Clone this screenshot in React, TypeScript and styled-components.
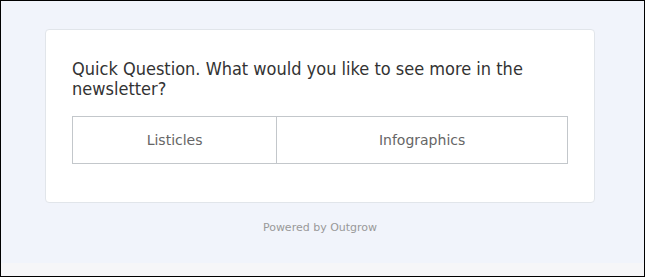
import styled, { createGlobalStyle } from "styled-components";

const GlobalStyle = createGlobalStyle`
    html, body {
        margin: 0;
        padding: 0;
        background: #ffffff;
    }
    * {
        box-sizing: border-box;
    }
`;

const Frame = styled.div`
    width: 645px;
    height: 277px;
    border: 1px solid #000;
    background: #f6f6f8;
    display: flex;
    flex-direction: column;
    font-family: "DejaVu Sans", Verdana, sans-serif;
`;

const Stage = styled.div`
    height: 262px;
    background: #f1f4fb;
    padding: 28px 49px 0 44px;
    display: flex;
    flex-direction: column;
`;

const Card = styled.div`
    height: 174px;
    background: #fff;
    border: 1px solid #e1e5ea;
    border-radius: 4px;
    padding: 29px 26px 0 26px;
`;

const Question = styled.p`
    margin: 0 0 17px;
    color: #333;
    font-size: 18px;
    line-height: 20px;
    font-stretch: condensed;
`;

const Options = styled.div`
    display: grid;
    grid-template-columns: 204fr 292fr;
    height: 48px;
    border: 1px solid #c3c7cb;
`;

const Option = styled.button<{ $first?: boolean }>`
    all: unset;
    display: flex;
    align-items: center;
    justify-content: center;
    border-left: ${(p) => (p.$first ? "none" : "1px solid #c3c7cb")};
    color: #666;
    font-size: 14px;
    font-family: "DejaVu Sans", Verdana, sans-serif;
    cursor: pointer;
    &:hover {
        background-color: #f7f9fc;
    }
`;

const Powered = styled.div`
    margin-top: 18px;
    text-align: center;
    font-size: 11px;
    color: #999;
`;

export default function App() {
    return (
        <>
            <GlobalStyle />
            <Frame>
                <Stage>
                    <Card>
                        <Question>
                            Quick Question. What would you like to see more in
                            the newsletter?
                        </Question>
                        <Options>
                            <Option $first>Listicles</Option>
                            <Option>Infographics</Option>
                        </Options>
                    </Card>
                    <Powered>Powered by Outgrow</Powered>
                </Stage>
            </Frame>
        </>
    );
}
